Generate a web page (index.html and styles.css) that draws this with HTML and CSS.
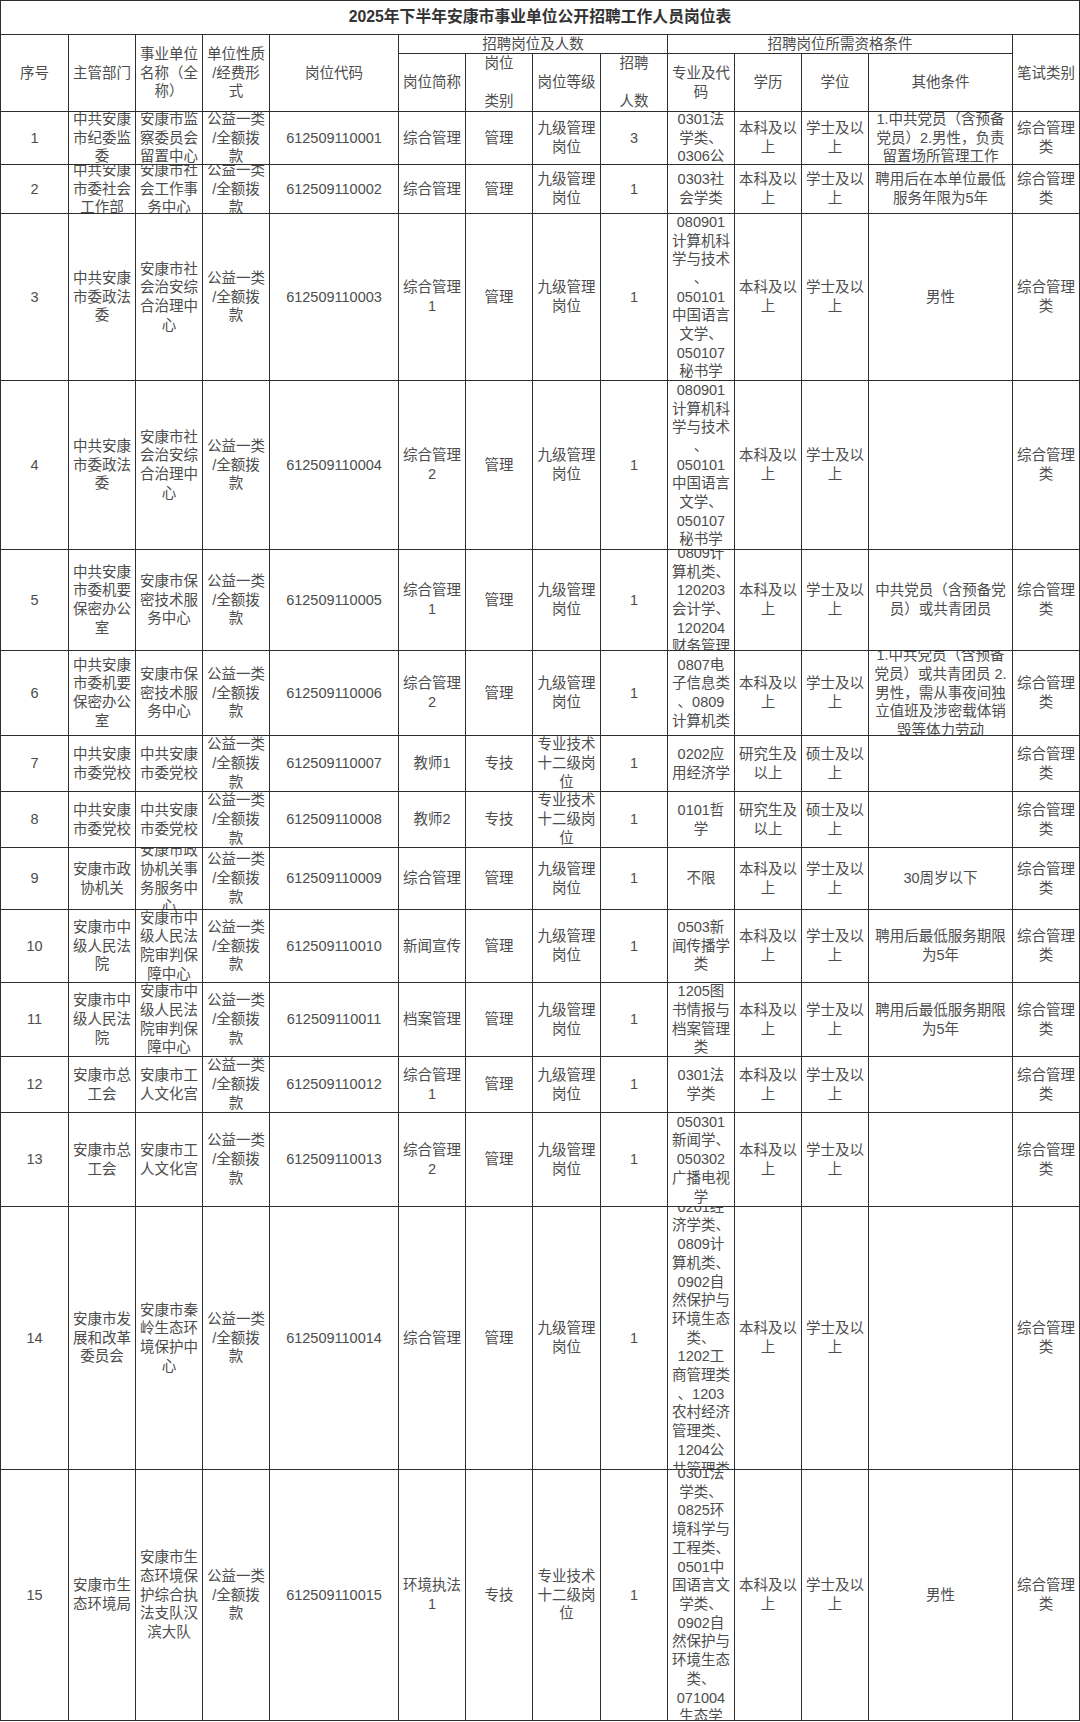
FILE: index.html
```html
<!DOCTYPE html>
<html lang="zh-CN">
<head>
<meta charset="utf-8">
<title>2025年下半年安康市事业单位公开招聘工作人员岗位表</title>
<link rel="stylesheet" href="styles.css">
</head>
<body>
<div class="sheet">
  <div class="c title">2025年下半年安康市事业单位公开招聘工作人员岗位表</div>

  <div class="c rs2">序号</div>
  <div class="c rs2">主管部门</div>
  <div class="c rs2">事业单位<br>名称（全<br>称）</div>
  <div class="c rs2">单位性质<br>/经费形<br>式</div>
  <div class="c rs2">岗位代码</div>
  <div class="c cs4">招聘岗位及人数</div>
  <div class="c cs4">招聘岗位所需资格条件</div>
  <div class="c rs2">笔试类别</div>
  <div class="c">岗位简称</div>
  <div class="c">岗位<br><br>类别</div>
  <div class="c">岗位等级</div>
  <div class="c">招聘<br><br>人数</div>
  <div class="c">专业及代<br>码</div>
  <div class="c">学历</div>
  <div class="c">学位</div>
  <div class="c">其他条件</div>

  <!-- 1 -->
  <div class="c">1</div>
  <div class="c">中共安康<br>市纪委监<br>委</div>
  <div class="c">安康市监<br>察委员会<br>留置中心</div>
  <div class="c">公益一类<br>/全额拨<br>款</div>
  <div class="c">612509110001</div>
  <div class="c">综合管理</div>
  <div class="c">管理</div>
  <div class="c">九级管理<br>岗位</div>
  <div class="c">3</div>
  <div class="c">0301法<br>学类、<br>0306公</div>
  <div class="c">本科及以<br>上</div>
  <div class="c">学士及以<br>上</div>
  <div class="c">1.中共党员（含预备<br>党员）2.男性，负责<br>留置场所管理工作</div>
  <div class="c">综合管理<br>类</div>

  <!-- 2 -->
  <div class="c">2</div>
  <div class="c">中共安康<br>市委社会<br>工作部</div>
  <div class="c">安康市社<br>会工作事<br>务中心</div>
  <div class="c">公益一类<br>/全额拨<br>款</div>
  <div class="c">612509110002</div>
  <div class="c">综合管理</div>
  <div class="c">管理</div>
  <div class="c">九级管理<br>岗位</div>
  <div class="c">1</div>
  <div class="c">0303社<br>会学类</div>
  <div class="c">本科及以<br>上</div>
  <div class="c">学士及以<br>上</div>
  <div class="c">聘用后在本单位最低<br>服务年限为5年</div>
  <div class="c">综合管理<br>类</div>

  <!-- 3 -->
  <div class="c">3</div>
  <div class="c">中共安康<br>市委政法<br>委</div>
  <div class="c">安康市社<br>会治安综<br>合治理中<br>心</div>
  <div class="c">公益一类<br>/全额拨<br>款</div>
  <div class="c">612509110003</div>
  <div class="c">综合管理<br>1</div>
  <div class="c">管理</div>
  <div class="c">九级管理<br>岗位</div>
  <div class="c">1</div>
  <div class="c">080901<br>计算机科<br>学与技术<br>、<br>050101<br>中国语言<br>文学、<br>050107<br>秘书学</div>
  <div class="c">本科及以<br>上</div>
  <div class="c">学士及以<br>上</div>
  <div class="c">男性</div>
  <div class="c">综合管理<br>类</div>

  <!-- 4 -->
  <div class="c">4</div>
  <div class="c">中共安康<br>市委政法<br>委</div>
  <div class="c">安康市社<br>会治安综<br>合治理中<br>心</div>
  <div class="c">公益一类<br>/全额拨<br>款</div>
  <div class="c">612509110004</div>
  <div class="c">综合管理<br>2</div>
  <div class="c">管理</div>
  <div class="c">九级管理<br>岗位</div>
  <div class="c">1</div>
  <div class="c">080901<br>计算机科<br>学与技术<br>、<br>050101<br>中国语言<br>文学、<br>050107<br>秘书学</div>
  <div class="c">本科及以<br>上</div>
  <div class="c">学士及以<br>上</div>
  <div class="c"></div>
  <div class="c">综合管理<br>类</div>

  <!-- 5 -->
  <div class="c">5</div>
  <div class="c">中共安康<br>市委机要<br>保密办公<br>室</div>
  <div class="c">安康市保<br>密技术服<br>务中心</div>
  <div class="c">公益一类<br>/全额拨<br>款</div>
  <div class="c">612509110005</div>
  <div class="c">综合管理<br>1</div>
  <div class="c">管理</div>
  <div class="c">九级管理<br>岗位</div>
  <div class="c">1</div>
  <div class="c">0809计<br>算机类、<br>120203<br>会计学、<br>120204<br>财务管理</div>
  <div class="c">本科及以<br>上</div>
  <div class="c">学士及以<br>上</div>
  <div class="c">中共党员（含预备党<br>员）或共青团员</div>
  <div class="c">综合管理<br>类</div>

  <!-- 6 -->
  <div class="c">6</div>
  <div class="c">中共安康<br>市委机要<br>保密办公<br>室</div>
  <div class="c">安康市保<br>密技术服<br>务中心</div>
  <div class="c">公益一类<br>/全额拨<br>款</div>
  <div class="c">612509110006</div>
  <div class="c">综合管理<br>2</div>
  <div class="c">管理</div>
  <div class="c">九级管理<br>岗位</div>
  <div class="c">1</div>
  <div class="c">0807电<br>子信息类<br>、0809<br>计算机类</div>
  <div class="c">本科及以<br>上</div>
  <div class="c">学士及以<br>上</div>
  <div class="c">1.中共党员（含预备<br>党员）或共青团员 2.<br>男性，需从事夜间独<br>立值班及涉密载体销<br>毁等体力劳动</div>
  <div class="c">综合管理<br>类</div>

  <!-- 7 -->
  <div class="c">7</div>
  <div class="c">中共安康<br>市委党校</div>
  <div class="c">中共安康<br>市委党校</div>
  <div class="c">公益一类<br>/全额拨<br>款</div>
  <div class="c">612509110007</div>
  <div class="c">教师1</div>
  <div class="c">专技</div>
  <div class="c">专业技术<br>十二级岗<br>位</div>
  <div class="c">1</div>
  <div class="c">0202应<br>用经济学</div>
  <div class="c">研究生及<br>以上</div>
  <div class="c">硕士及以<br>上</div>
  <div class="c"></div>
  <div class="c">综合管理<br>类</div>

  <!-- 8 -->
  <div class="c">8</div>
  <div class="c">中共安康<br>市委党校</div>
  <div class="c">中共安康<br>市委党校</div>
  <div class="c">公益一类<br>/全额拨<br>款</div>
  <div class="c">612509110008</div>
  <div class="c">教师2</div>
  <div class="c">专技</div>
  <div class="c">专业技术<br>十二级岗<br>位</div>
  <div class="c">1</div>
  <div class="c">0101哲<br>学</div>
  <div class="c">研究生及<br>以上</div>
  <div class="c">硕士及以<br>上</div>
  <div class="c"></div>
  <div class="c">综合管理<br>类</div>

  <!-- 9 -->
  <div class="c">9</div>
  <div class="c">安康市政<br>协机关</div>
  <div class="c">安康市政<br>协机关事<br>务服务中<br>心</div>
  <div class="c">公益一类<br>/全额拨<br>款</div>
  <div class="c">612509110009</div>
  <div class="c">综合管理</div>
  <div class="c">管理</div>
  <div class="c">九级管理<br>岗位</div>
  <div class="c">1</div>
  <div class="c">不限</div>
  <div class="c">本科及以<br>上</div>
  <div class="c">学士及以<br>上</div>
  <div class="c">30周岁以下</div>
  <div class="c">综合管理<br>类</div>

  <!-- 10 -->
  <div class="c">10</div>
  <div class="c">安康市中<br>级人民法<br>院</div>
  <div class="c">安康市中<br>级人民法<br>院审判保<br>障中心</div>
  <div class="c">公益一类<br>/全额拨<br>款</div>
  <div class="c">612509110010</div>
  <div class="c">新闻宣传</div>
  <div class="c">管理</div>
  <div class="c">九级管理<br>岗位</div>
  <div class="c">1</div>
  <div class="c">0503新<br>闻传播学<br>类</div>
  <div class="c">本科及以<br>上</div>
  <div class="c">学士及以<br>上</div>
  <div class="c">聘用后最低服务期限<br>为5年</div>
  <div class="c">综合管理<br>类</div>

  <!-- 11 -->
  <div class="c">11</div>
  <div class="c">安康市中<br>级人民法<br>院</div>
  <div class="c">安康市中<br>级人民法<br>院审判保<br>障中心</div>
  <div class="c">公益一类<br>/全额拨<br>款</div>
  <div class="c">612509110011</div>
  <div class="c">档案管理</div>
  <div class="c">管理</div>
  <div class="c">九级管理<br>岗位</div>
  <div class="c">1</div>
  <div class="c">1205图<br>书情报与<br>档案管理<br>类</div>
  <div class="c">本科及以<br>上</div>
  <div class="c">学士及以<br>上</div>
  <div class="c">聘用后最低服务期限<br>为5年</div>
  <div class="c">综合管理<br>类</div>

  <!-- 12 -->
  <div class="c">12</div>
  <div class="c">安康市总<br>工会</div>
  <div class="c">安康市工<br>人文化宫</div>
  <div class="c">公益一类<br>/全额拨<br>款</div>
  <div class="c">612509110012</div>
  <div class="c">综合管理<br>1</div>
  <div class="c">管理</div>
  <div class="c">九级管理<br>岗位</div>
  <div class="c">1</div>
  <div class="c">0301法<br>学类</div>
  <div class="c">本科及以<br>上</div>
  <div class="c">学士及以<br>上</div>
  <div class="c"></div>
  <div class="c">综合管理<br>类</div>

  <!-- 13 -->
  <div class="c">13</div>
  <div class="c">安康市总<br>工会</div>
  <div class="c">安康市工<br>人文化宫</div>
  <div class="c">公益一类<br>/全额拨<br>款</div>
  <div class="c">612509110013</div>
  <div class="c">综合管理<br>2</div>
  <div class="c">管理</div>
  <div class="c">九级管理<br>岗位</div>
  <div class="c">1</div>
  <div class="c">050301<br>新闻学、<br>050302<br>广播电视<br>学</div>
  <div class="c">本科及以<br>上</div>
  <div class="c">学士及以<br>上</div>
  <div class="c"></div>
  <div class="c">综合管理<br>类</div>

  <!-- 14 -->
  <div class="c">14</div>
  <div class="c">安康市发<br>展和改革<br>委员会</div>
  <div class="c">安康市秦<br>岭生态环<br>境保护中<br>心</div>
  <div class="c">公益一类<br>/全额拨<br>款</div>
  <div class="c">612509110014</div>
  <div class="c">综合管理</div>
  <div class="c">管理</div>
  <div class="c">九级管理<br>岗位</div>
  <div class="c">1</div>
  <div class="c">0201经<br>济学类、<br>0809计<br>算机类、<br>0902自<br>然保护与<br>环境生态<br>类、<br>1202工<br>商管理类<br>、1203<br>农村经济<br>管理类、<br>1204公<br>共管理类</div>
  <div class="c">本科及以<br>上</div>
  <div class="c">学士及以<br>上</div>
  <div class="c"></div>
  <div class="c">综合管理<br>类</div>

  <!-- 15 -->
  <div class="c">15</div>
  <div class="c">安康市生<br>态环境局</div>
  <div class="c">安康市生<br>态环境保<br>护综合执<br>法支队汉<br>滨大队</div>
  <div class="c">公益一类<br>/全额拨<br>款</div>
  <div class="c">612509110015</div>
  <div class="c">环境执法<br>1</div>
  <div class="c">专技</div>
  <div class="c">专业技术<br>十二级岗<br>位</div>
  <div class="c">1</div>
  <div class="c">0301法<br>学类、<br>0825环<br>境科学与<br>工程类、<br>0501中<br>国语言文<br>学类、<br>0902自<br>然保护与<br>环境生态<br>类、<br>071004<br>生态学</div>
  <div class="c">本科及以<br>上</div>
  <div class="c">学士及以<br>上</div>
  <div class="c">男性</div>
  <div class="c">综合管理<br>类</div>
</div>
</body>
</html>
```

FILE: styles.css
```css
html, body {
  margin: 0;
  padding: 0;
  background: #fff;
}

body {
  font-family: "Liberation Sans", "Noto Sans CJK SC", sans-serif;
  font-size: 14.5px;
  line-height: 18.7px;
  color: #4d4d4d;
}

.sheet {
  box-sizing: border-box;
  width: 1080px;
  display: grid;
  grid-template-columns: 67px 66px 66px 66px 128px 66px 66px 67px 66px 66px 66px 66px 143px 66px;
  grid-template-rows: 33px 18px 57px 52px 48px 166px 168px 100px 84px 55px 55px 61px 72px 73px 55px 93px 262px 250px;
  gap: 1px;
  padding: 1px;
  background: #2e2e2e;
}

.c {
  background: #fff;
  display: flex;
  align-items: center;
  justify-content: center;
  text-align: center;
  white-space: nowrap;
  overflow: hidden;
  padding: 0 2px;
}

.title {
  grid-column: 1 / -1;
  font-weight: bold;
  font-size: 15.8px;
  color: #333;
}

.rs2 {
  grid-row: span 2;
}

.cs4 {
  grid-column: span 4;
}
```
